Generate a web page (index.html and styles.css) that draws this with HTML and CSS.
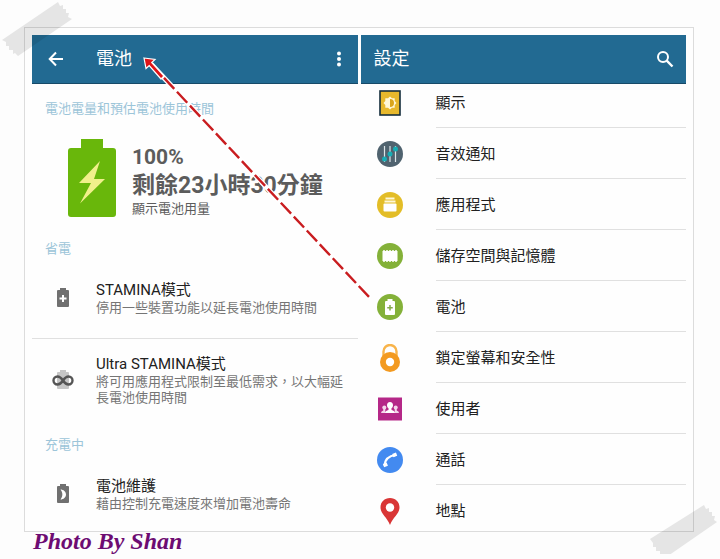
FILE: index.html
```
<!DOCTYPE html>
<html lang="zh-Hant">
<head>
  <meta charset="UTF-8">
  <meta name="viewport" content="width=device-width, initial-scale=1.0">
  <title>電池設定</title>
  <link rel="stylesheet" href="styles.css">
</head>
<body>
  <div class="photo">
    <div class="frame">
      <section class="panel battery-panel">
        <header class="header">
          <button class="icon-btn" aria-label="返回">
            <svg width="16" height="16" viewBox="0 0 16 16" fill="none" stroke="currentColor" stroke-width="2"><path d="M15 8H2M8 1.5L1.7 8 8 14.5"/></svg>
          </button>
          <h1>電池</h1>
          <button class="icon-btn menu-btn" aria-label="選單">
            <svg width="6" height="16" viewBox="0 0 6 16" fill="currentColor"><circle cx="3" cy="2.5" r="2"/><circle cx="3" cy="8" r="2"/><circle cx="3" cy="13.5" r="2"/></svg>
          </button>
        </header>

        <h2 class="section-label first-label">電池電量和預估電池使用時間</h2>
        <div class="battery-status">
          <svg width="48" height="78" viewBox="0 0 48 78">
            <path fill="#69b70b" d="M13 0h22v9h10a3 3 0 0 1 3 3v63a3 3 0 0 1-3 3H3a3 3 0 0 1-3-3V12a3 3 0 0 1 3-3h10z"/>
            <path fill="#f1f08b" d="M32 22L11 44h12L12 64.500 37 40H26z"/>
          </svg>
          <div class="status-text">
            <div class="level">100%</div>
            <div class="remaining">剩餘23小時30分鐘</div>
            <div class="usage">顯示電池用量</div>
          </div>
        </div>

        <h2 class="section-label">省電</h2>
        <div class="item divided">
          <svg width="22" height="22" viewBox="0 0 22 22">
            <path fill="#707070" d="M8 1h6v2h2q1 0 1 1v15q0 1-1 1H6q-1 0-1-1V4q0-1 1-1h2z"/>
            <path stroke="#fff" stroke-width="2" d="M11 8v7M7.500 11.500h7"/>
          </svg>
          <div class="item-text">
            <h3>STAMINA模式</h3>
            <p>停用一些裝置功能以延長電池使用時間</p>
          </div>
        </div>
        <div class="item compact">
          <svg width="22" height="22" viewBox="0 0 22 22">
            <path fill="#c6c6c6" d="M8 1h6v2h2q1 0 1 1v15q0 1-1 1H6q-1 0-1-1V4q0-1 1-1h2z"/>
            <path fill="none" stroke="#555" stroke-width="2.400" d="M11 11.500C9 8.500 7.500 7.500 5.500 7.500a4 4 0 0 0 0 8C7.500 15.500 9 14.500 11 11.500S14.500 7.500 16.500 7.500a4 4 0 0 1 0 8C14.500 15.500 13 14.500 11 11.500S7.500 7.500 5.500 7.500"/>
          </svg>
          <div class="item-text">
            <h3>Ultra STAMINA模式</h3>
            <p>將可用應用程式限制至最低需求，以大幅延長電池使用時間</p>
          </div>
        </div>

        <h2 class="section-label">充電中</h2>
        <div class="item last-item">
          <svg width="22" height="22" viewBox="0 0 22 22">
            <path fill="#707070" d="M8 1h6v2h2q1 0 1 1v15q0 1-1 1H6q-1 0-1-1V4q0-1 1-1h2z"/>
            <path fill="#fff" d="M8.500 6.500c3 0 5.500 2.200 5.500 5s-2.500 5-5.500 5c2.500-3 2.500-7 0-10z"/>
          </svg>
          <div class="item-text">
            <h3>電池維護</h3>
            <p>藉由控制充電速度來增加電池壽命</p>
          </div>
        </div>
      </section>

      <section class="panel">
        <header class="header settings-header">
          <h1>設定</h1>
          <button class="icon-btn menu-btn" aria-label="搜尋">
            <svg width="18" height="18" viewBox="0 0 18 18" fill="none" stroke="currentColor" stroke-width="2"><circle cx="7" cy="7" r="5"/><path d="M10.700 10.700L16.500 16.500" stroke-width="2.400"/></svg>
          </button>
        </header>
        <nav class="settings-list">
          <a class="row" href="#">
            <svg width="28" height="28" viewBox="0 0 28 28">
              <rect x="4" y="2" width="20" height="24" fill="#e7b82c" stroke="#142d3c" stroke-width="1.600"/>
              <path fill="#fff8d8" d="M14 7.500l2 1.800h2.700V12l1.800 2-1.800 2v2.700H16l-2 1.800-2-1.800H9.300V16l-1.800-2 1.800-2V9.300H12z"/>
              <path fill="#d9a51c" d="M14 10a4 4 0 0 1 0 8z"/>
            </svg>
            <span>顯示</span>
          </a>
          <a class="row" href="#">
            <svg width="28" height="28" viewBox="0 0 28 28">
              <circle cx="14" cy="14" r="13" fill="#50636f"/>
              <path stroke="#dde5e8" stroke-width="1.200" d="M8.500 6v16M14 6v16M19.500 6v16"/>
              <g fill="#16adb5"><circle cx="8.500" cy="19" r="2.500"/><circle cx="14" cy="14" r="2.500"/><circle cx="19.500" cy="9" r="2.500"/></g>
            </svg>
            <span>音效通知</span>
          </a>
          <a class="row" href="#">
            <svg width="28" height="28" viewBox="0 0 28 28">
              <circle cx="14" cy="14" r="13" fill="#e3bd27"/>
              <path fill="#fff8d7" d="M9.500 6.500h9v2h-9zM8.500 9.500h11v2h-11z"/>
              <rect x="7.500" y="12.500" width="13" height="8" rx="1" fill="#fff"/>
            </svg>
            <span>應用程式</span>
          </a>
          <a class="row" href="#">
            <svg width="28" height="28" viewBox="0 0 28 28">
              <circle cx="14" cy="14" r="13" fill="#84b139"/>
              <rect x="6.500" y="9" width="15" height="10" fill="#fff"/>
              <path stroke="#fff" stroke-width="1.500" d="M8 8v12M11 8v12M14 8v12M17 8v12M20 8v12"/>
            </svg>
            <span>儲存空間與記憶體</span>
          </a>
          <a class="row" href="#">
            <svg width="28" height="28" viewBox="0 0 28 28">
              <circle cx="14" cy="14" r="13" fill="#84b139"/>
              <path fill="#fff" d="M11.500 6h5v2H18q1 0 1 1v12q0 1-1 1h-8q-1 0-1-1V9q0-1 1-1h1.500z"/>
              <path stroke="#84a94b" stroke-width="1.500" d="M14 12v5.500M11.250 14.750h5.500"/>
            </svg>
            <span>電池</span>
          </a>
          <a class="row" href="#">
            <svg width="28" height="28" viewBox="0 0 28 28">
              <path fill="none" stroke="#f8b44b" stroke-width="2.400" d="M7.500 12V7.500a6.500 6.500 0 0 1 13 0V12"/>
              <circle cx="14" cy="18" r="10" fill="#f39a20"/>
              <circle cx="14" cy="18" r="4.200" fill="#fff"/>
            </svg>
            <span>鎖定螢幕和安全性</span>
          </a>
          <a class="row" href="#">
            <svg width="28" height="28" viewBox="0 0 28 28">
              <rect x="2" y="2.500" width="24" height="23" fill="#b52888"/>
              <g fill="#f4d6eb"><circle cx="8.300" cy="12.500" r="2"/><circle cx="19.700" cy="12.500" r="2"/><path d="M5 18q0-2 2.300-2.500V13h2v5zM23 18q0-2-2.300-2.500V13h-2v5z"/></g>
              <path fill="#fff" d="M14 7c2 0 3 1.300 3 3.200 0 1.500-.7 2.500-1.500 3V15c2.300.5 3.500 1.500 3.500 3H9c0-1.500 1.200-2.500 3.500-3v-1.800c-.8-.5-1.500-1.500-1.500-3C11 8.300 12 7 14 7z"/>
            </svg>
            <span>使用者</span>
          </a>
          <a class="row" href="#">
            <svg width="28" height="28" viewBox="0 0 28 28">
              <circle cx="14" cy="14" r="13" fill="#438af0"/>
              <path fill="none" stroke="#fff" stroke-width="2.200" d="M8.500 19.500C9 13.500 13 9.800 19.500 9"/>
              <path stroke="#fff" stroke-width="3.400" d="M7.500 19.700l3.800-1.500M16.800 9.700l3.800-1.500"/>
            </svg>
            <span>通話</span>
          </a>
          <a class="row" href="#">
            <svg width="28" height="28" viewBox="0 0 28 28">
              <path fill="#d93636" d="M14 1c5.500 0 9.500 4 9.500 9.300C23.500 17 17 20 14 28 11 20 4.500 17 4.500 10.300 4.500 5 8.500 1 14 1z"/>
              <circle cx="14" cy="10.500" r="4.200" fill="#fff"/>
            </svg>
            <span>地點</span>
          </a>
        </nav>
      </section>
    </div>

    <p class="signature">Photo By Shan</p>

    <svg class="arrow" width="230" height="244" viewBox="0 0 230 244">
      <path d="M8 7L227 241" stroke="#fff" stroke-width="5"/>
      <path d="M8 7L227 241" stroke="#c91d20" stroke-width="2.400" stroke-dasharray="15 4"/>
      <path d="M1 1l11 1.500-3.300 3L21 19l-3 3L6.200 8.500 3 11.500z" fill="#e01418" stroke="#fff" stroke-width="1.200"/>
    </svg>
    <svg class="tape tape-top" width="70" height="56" viewBox="0 0 70 56">
      <path d="M56 1l2 4 3-1v4l3 0 0 4 3 0-1 4 4 2L16 55l-3-3-2 1 0-4-4 0 0-4-3 0 0-4-4-2z"/>
    </svg>
    <svg class="tape tape-bottom" width="68" height="54" viewBox="0 0 68 54">
      <path d="M54 0l2 4 3-1v4l3 0 0 4 3 0-1 4 3 2L15 53l-3-4-2 1 0-4-4 0 0-4-3 0 0-4-3-4z"/>
    </svg>
  </div>
</body>
</html>
```
FILE: styles.css
```
* {
  margin: 0; padding: 0;
  box-sizing: border-box;
}
body {
  background: #fdfdfd; color: #212121;
  font-family: Roboto, "Noto Sans CJK TC", sans-serif;
}
svg { display: block; flex-shrink: 0; }
.photo { position: relative; padding: 27px 26px 0 24px; }
.frame {
  display: grid; grid-template-columns: 1fr 1fr; gap: 3px;
  padding: 7px 7px 0; background: #fefefe;
  border: 1px solid #dcdcdc;
}
.panel { min-width: 0; }

.header {
  height: 49px; display: flex; align-items: center;
  padding: 0 12px 0 16px;
  background: #226a92; color: #fff;
  border-bottom: 1px solid #174a68;
}
.header h1 { font-size: 18px; line-height: 24px; font-weight: 400; }
.battery-panel .header h1 { margin-left: 32px; }
.settings-header { padding-left: 13px; }
.icon-btn {
  background: none; border: none; color: #fff; cursor: pointer;
}
.menu-btn { margin-left: auto; }
.battery-panel .menu-btn { margin-right: 4px; }

.section-label {
  padding: 23px 13px 0;
  font-size: 13px; line-height: 18px; font-weight: 400;
  color: #9cc5d9;
}
.first-label { padding-top: 16px; }

.battery-status {
  display: flex; align-items: flex-end; gap: 16px;
  padding: 21px 12px 0 36px; color: #5c5c5c;
}
.level { font-size: 21px; line-height: 28px; font-weight: 700; }
.remaining { font-size: 23px; line-height: 30px; font-weight: 700; white-space: nowrap; }
.usage { font-size: 13px; line-height: 16px; }

.item {
  display: flex; align-items: center; gap: 22px;
  padding: 22px 12px 22px 20px;
}
.divided { border-bottom: 1px solid #e0e0e0; }
.compact { padding-top: 15px; padding-bottom: 7px; }
.last-item { padding-bottom: 18px; }
.item h3 { font-size: 15px; line-height: 20px; font-weight: 400; }
.item p { font-size: 13px; line-height: 16px; color: #757575; }

.settings-list { overflow: hidden; }
.row {
  display: flex; align-items: center; gap: 32px;
  height: 51px; padding-left: 15px;
  color: #212121; text-decoration: none;
  font-size: 15px;
}
.row span {
  flex: 1; height: 51px; line-height: 52px;
  border-bottom: 1px solid #e0e0e0;
}
/* list is scrolled a little under the header */
.row:first-child { margin-top: -7px; }
.row:last-child { margin-bottom: -5px; }
.row:last-child span { border-bottom: none; }

.signature {
  padding-left: 9px;
  font-family: "Liberation Serif", serif;
  font-size: 24px; line-height: 26px;
  height: 26px; margin-top: -4px;
  position: relative;
  font-weight: 700; font-style: italic;
  color: #6d0c72;
}
.arrow { position: absolute; left: 143px; top: 57px; }
.tape { position: absolute; fill: #000; opacity: 0.09; }
.tape-top { left: 2px; top: 1px; }
.tape-bottom { right: 2px; top: 505px; }
```
